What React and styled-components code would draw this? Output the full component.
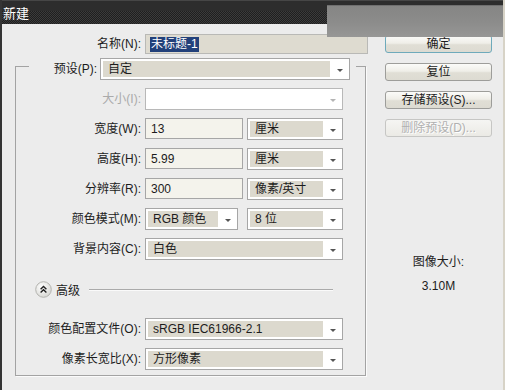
import React from 'react';
import styled, { createGlobalStyle } from 'styled-components';

const GlobalStyle = createGlobalStyle`
  html, body {
    margin: 0;
    padding: 0;
    background: #ececec;
  }
  body {
    font-family: "Liberation Sans", "Noto Sans CJK SC", sans-serif;
    font-size: 12px;
    color: #1c1c1c;
  }
`;

const Window = styled.div`
  position: relative;
  width: 505px;
  height: 390px;
  box-sizing: border-box;
  border-left: 2px solid #343434;
  border-right: 2px solid #d7d3c7;
  background: #ececec;
  overflow: hidden;
`;

const TitleBar = styled.div`
  height: 24px;
  box-sizing: border-box;
  padding-left: 1px;
  display: flex;
  align-items: center;
  color: #fff;
  font-size: 13px;
  background:
    linear-gradient(#464646 0 1px, #2d2d2d 1px 11px, transparent 11px),
    repeating-conic-gradient(#1f1f1f 0 25%, #3b3b3b 0 50%) 0 0 / 2px 2px;
`;

const Shade = styled.div`
  position: absolute;
  top: 5px;
  left: 325px;
  right: 0;
  height: 32px;
  background:
    linear-gradient(#6f6f6f 0 1px, transparent 1px),
    linear-gradient(#858584, #8c8c8b 55%, #979796);
`;

const Body = styled.div`
  display: flex;
`;

const Main = styled.div`
  width: 366px;
  display: flex;
  flex-direction: column;
`;

const NameRow = styled.div`
  display: flex;
  align-items: center;
  gap: 4px;
  margin-top: 10px;
  height: 20px;
`;

const Label = styled.div`
  width: ${p => p.$width || 125}px;
  flex-shrink: 0;
  text-align: right;
  line-height: 16px;
  white-space: nowrap;
  color: ${p => (p.$disabled ? '#aaaaaa' : '#1c1c1c')};
`;

const NameInput = styled.div`
  width: 223px;
  height: 20px;
  box-sizing: border-box;
  border: 1px solid #b9b9b6;
  background: #dedbd0;
  padding-left: 4px;
  display: flex;
  align-items: center;
`;

const Selected = styled.span`
  background: #22407a;
  color: #fff;
  line-height: 15px;
  padding: 0 1px;
`;

const Group = styled.div`
  margin: 12px 0 0 13px;
  width: 351px;
  box-sizing: border-box;
  border: 1px solid #a3a3a3;
  box-shadow: 1px 1px 0 #fbfbfb;
  padding-bottom: 5px;
  display: flex;
  flex-direction: column;
  gap: 8px;
`;

const Legend = styled.div`
  margin: -9px 9px 0 13px;
  padding: 0 6px 0 21px;
  background: #ececec;
  display: flex;
  align-items: center;
  gap: 3px;
`;

const Row = styled.div`
  display: flex;
  align-items: center;
  gap: ${p => p.$gap || 4}px;
  height: 22px;
`;

const Fields = styled.div`
  display: flex;
  gap: ${p => p.$gap || 4}px;
`;

const SelectBox = styled.div`
  width: ${p => p.$width}px;
  height: ${p => p.$height || 22}px;
  box-sizing: border-box;
  border: 1px solid ${p => (p.$disabled ? '#b8b8b8' : '#a6a6a6')};
  background: #fff;
  padding: 2px 0 2px 2px;
  display: flex;
`;

const SelectValue = styled.div`
  flex: 1;
  background: ${p => (p.$disabled ? '#fff' : '#dcd9ce')};
  padding-left: 5px;
  display: flex;
  align-items: center;
  white-space: nowrap;
  line-height: 16px;
`;

const ArrowZone = styled.div`
  width: 19px;
  display: flex;
  align-items: center;
  justify-content: center;
  &::after {
    content: '';
    width: 0;
    height: 0;
    margin-top: 2px;
    border-left: 3px solid transparent;
    border-right: 3px solid transparent;
    border-top: 3px solid ${p => (p.$disabled ? '#b4b4b4' : '#555')};
  }
`;

const TextInput = styled.div`
  width: ${p => p.$width}px;
  height: 21px;
  box-sizing: border-box;
  border: 1px solid #a6a6a6;
  background: #f4f3ec;
  padding-left: 5px;
  display: flex;
  align-items: center;
  line-height: 16px;
`;

const Advanced = styled.div`
  display: flex;
  align-items: center;
  gap: 4px;
  height: 17px;
  padding-left: 19px;
  margin: 13px 0 12px;
`;

const Rule = styled.div`
  flex: 1;
  height: 1px;
  margin: 0 32px 0 5px;
  background: #aaaaaa;
  box-shadow: 0 1px 0 #fafafa;
`;

const Side = styled.div`
  margin-left: 17px;
  width: 107px;
  display: flex;
  flex-direction: column;
  gap: 10px;
  padding-top: 11px;
`;

const Button = styled.div`
  height: 18px;
  box-sizing: border-box;
  border: 1px solid ${p => (p.$primary ? '#6eaabb' : p.$disabled ? '#c6c6c4' : '#9d9d9a')};
  border-radius: 3px;
  background: ${p =>
    p.$disabled
      ? 'linear-gradient(#f5f5f3, #ebeae5)'
      : 'linear-gradient(#fbfbf9, #efeee8 45%, #e0ded5 55%, #dddbd2)'};
  color: ${p => (p.$disabled ? '#b0b0b0' : '#1c1c1c')};
  text-shadow: ${p => (p.$disabled ? '1px 1px 0 #fff' : 'none')};
  display: flex;
  align-items: center;
  justify-content: center;
  line-height: 14px;
`;

const Info = styled.div`
  margin-top: 107px;
  text-align: center;
  line-height: 16px;
  display: flex;
  flex-direction: column;
  gap: 8px;
`;

function Select({ width, value, disabled, fill }) {
  return (
    <SelectBox $width={width} $disabled={disabled}>
      <SelectValue $disabled={disabled}>{value}</SelectValue>
      <ArrowZone $disabled={disabled} />
    </SelectBox>
  );
}

function AdvancedIcon() {
  return (
    <svg width="17" height="17" viewBox="0 0 17 17">
      <defs>
        <radialGradient id="adv" cx="40%" cy="35%" r="70%">
          <stop offset="0" stopColor="#ffffff" />
          <stop offset="1" stopColor="#d6d6d2" />
        </radialGradient>
      </defs>
      <circle cx="8.5" cy="8.5" r="7.8" fill="url(#adv)" stroke="#b4b4b0" />
      <path
        d="M5.6 8.2 L8.5 5.4 L11.4 8.2 M5.6 11.6 L8.5 8.8 L11.4 11.6"
        fill="none"
        stroke="#202020"
        strokeWidth="1.4"
      />
    </svg>
  );
}

const rows = [
  { label: '大小(I):', disabled: true, full: '' },
  { label: '宽度(W):', input: '13', unit: '厘米' },
  { label: '高度(H):', input: '5.99', unit: '厘米' },
  { label: '分辨率(R):', input: '300', unit: '像素/英寸' },
  { label: '颜色模式(M):', mode: 'RGB 颜色', unit: '8 位' },
  { label: '背景内容(C):', full: '白色' },
];

export default function App() {
  return (
    <>
      <GlobalStyle />
      <Window>
        <TitleBar>新建</TitleBar>
        <Body>
          <Main>
            <NameRow>
              <Label $width={139}>名称(N):</Label>
              <NameInput>
                <Selected>未标题-1</Selected>
              </NameInput>
            </NameRow>
            <Group>
              <Legend>
                <Label $width={47}>预设(P):</Label>
                <Select width={250} value="自定" />
              </Legend>
              {rows.map(r => (
                <Row key={r.label}>
                  <Label $disabled={r.disabled}>{r.label}</Label>
                  {r.full !== undefined && (
                    <Select width={198} value={r.full} disabled={r.disabled} />
                  )}
                  {r.input && (
                    <Fields>
                      <TextInput $width={98}>{r.input}</TextInput>
                      <Select width={96} value={r.unit} />
                    </Fields>
                  )}
                  {r.mode && (
                    <Fields $gap={9}>
                      <Select width={93} value={r.mode} />
                      <Select width={96} value={r.unit} />
                    </Fields>
                  )}
                </Row>
              ))}
              <Advanced>
                <AdvancedIcon />
                <span>高级</span>
                <Rule />
              </Advanced>
              <Row>
                <Label>颜色配置文件(O):</Label>
                <Select width={198} value="sRGB IEC61966-2.1" />
              </Row>
              <Row>
                <Label>像素长宽比(X):</Label>
                <Select width={198} value="方形像素" />
              </Row>
            </Group>
          </Main>
          <Side>
            <Button $primary>确定</Button>
            <Button>复位</Button>
            <Button>存储预设(S)...</Button>
            <Button $disabled>删除预设(D)...</Button>
            <Info>
              <div>图像大小:</div>
              <div>3.10M</div>
            </Info>
          </Side>
        </Body>
        <Shade />
      </Window>
    </>
  );
}
